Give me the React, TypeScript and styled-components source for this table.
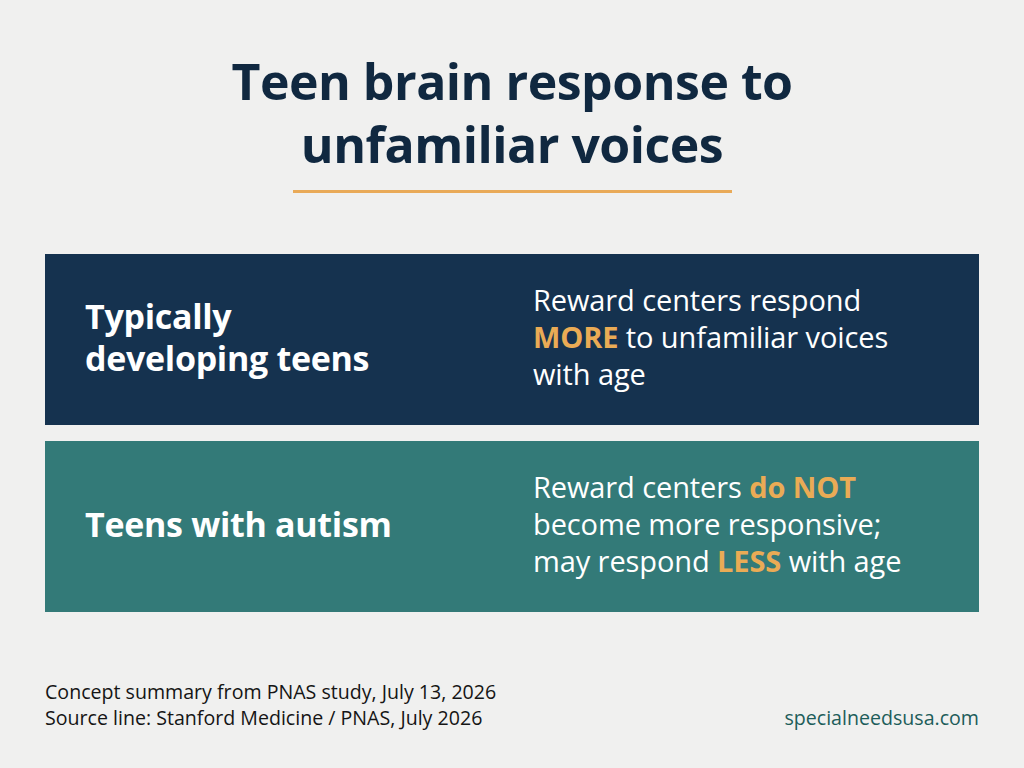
import React from "react";
import styled, { createGlobalStyle } from "styled-components";

const Global = createGlobalStyle`
  html, body { margin: 0; padding: 0; background: #f0f0ef; }
  body { font-family: "Open Sans", "Liberation Sans", sans-serif; }
`;

const Page = styled.div`
  width: 1024px;
  height: 768px;
  box-sizing: border-box;
  background: #f0f0ef;
  display: flex;
  flex-direction: column;
  padding: 50px 45px 0 45px;
`;

const Title = styled.h1`
  margin: 0;
  text-align: center;
  font-family: "Open Sans", sans-serif;
  font-weight: 700;
  font-size: 50px;
  line-height: 63px;
  color: #102840;
  letter-spacing: -0.5px;
`;

const Rule = styled.div`
  align-self: center;
  width: 439px;
  height: 3px;
  background: #e9aa58;
  margin-top: 14px;
`;

const Cards = styled.div`
  display: flex;
  flex-direction: column;
  gap: 16px;
  margin-top: 61px;
`;

const Card = styled.div<{ $bg: string }>`
  background: ${(p) => p.$bg};
  height: 171px;
  box-sizing: border-box;
  display: grid;
  grid-template-columns: 448px 1fr;
  align-items: center;
  padding: 0 0 6px 40px;
`;

const Label = styled.div`
  color: #ffffff;
  font-weight: 700;
  font-size: 34px;
  line-height: 42px;
  letter-spacing: -0.3px;
`;

const Desc = styled.div`
  color: #ffffff;
  font-weight: 400;
  font-size: 29px;
  line-height: 37px;
  letter-spacing: -0.1px;
`;

const Hi = styled.span`
  color: #eaab55;
  font-weight: 700;
`;

const Footer = styled.div`
  margin-top: 67px;
  display: flex;
  justify-content: space-between;
  align-items: flex-end;
`;

const Notes = styled.div`
  color: #151515;
  font-size: 19.6px;
  line-height: 26px;
`;

const Site = styled.div`
  color: #1d5d5a;
  font-size: 19.6px;
  line-height: 26px;
`;

export default function App() {
  return (
    <>
      <Global />
      <Page>
        <Title>
          Teen brain response to
          <br />
          unfamiliar voices
        </Title>
        <Rule />
        <Cards>
          <Card $bg="#15324f">
            <Label>
              Typically
              <br />
              developing teens
            </Label>
            <Desc>
              Reward centers respond
              <br />
              <Hi>MORE</Hi> to unfamiliar voices
              <br />
              with age
            </Desc>
          </Card>
          <Card $bg="#337a78">
            <Label>Teens with autism</Label>
            <Desc>
              Reward centers <Hi>do NOT</Hi>
              <br />
              become more responsive;
              <br />
              may respond <Hi>LESS</Hi> with age
            </Desc>
          </Card>
        </Cards>
        <Footer>
          <Notes>
            Concept summary from PNAS study, July 13, 2026
            <br />
            Source line: Stanford Medicine / PNAS, July 2026
          </Notes>
          <Site>specialneedsusa.com</Site>
        </Footer>
      </Page>
    </>
  );
}
